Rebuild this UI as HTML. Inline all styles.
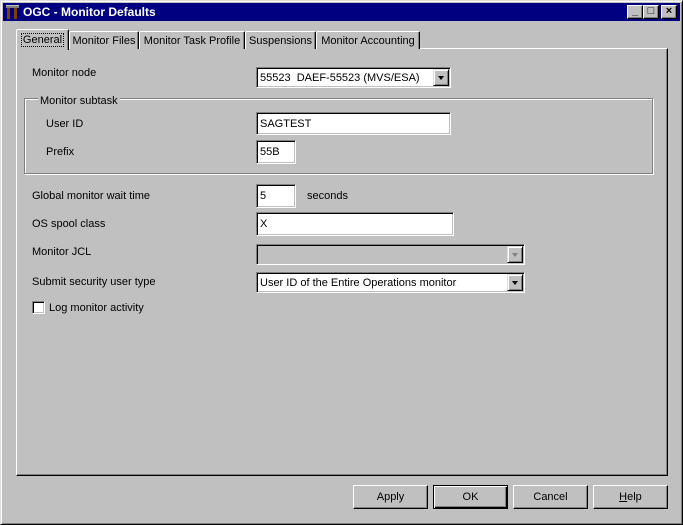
<!DOCTYPE html>
<html><head><meta charset="utf-8"><style>
*{box-sizing:border-box;margin:0;padding:0}
body{width:683px;height:525px;background:#c0c0c0;font-family:"Liberation Sans",sans-serif;font-size:11px;color:#000;position:relative;overflow:hidden}
.a{position:absolute}
.win{left:0;top:0;width:683px;height:525px;border:1px solid;border-color:#dfdfdf #000 #000 #dfdfdf;box-shadow:inset 1px 1px #fff,inset -1px -1px #808080}
.title{left:3px;top:3px;width:677px;height:18px;background:#000080;color:#fff;font-weight:bold;font-size:12px;line-height:18px;padding-left:20px}
.tb{top:5px;width:16px;height:14px;background:#c0c0c0;border:1px solid;border-color:#fff #000 #000 #fff;box-shadow:inset -1px -1px #808080;font-size:11px;line-height:11px;text-align:center;font-weight:bold;color:#000}
.panel{left:16px;top:48px;width:652px;height:428px;border:1px solid;border-color:#fff #000 #000 #fff;box-shadow:inset -1px -1px #808080}
.tab{top:31px;height:18px;border:1px solid;border-bottom:none;border-color:#fff #000 #000 #fff;box-shadow:inset -1px 0 #808080;background:#c0c0c0;text-align:center;line-height:19px;border-radius:2px 2px 0 0}
.sunk{border:1px solid;border-color:#808080 #fff #fff #808080;box-shadow:inset 1px 1px #000,inset -1px -1px #c0c0c0;background:#fff;padding:4px 0 0 3px;line-height:14px}
.btn{border:1px solid;border-color:#fff #000 #000 #fff;box-shadow:inset -1px -1px #808080;background:#c0c0c0;text-align:center;line-height:22px}
.arr{width:16px;height:17px;top:1px;right:1px;border:1px solid;border-color:#dfdfdf #000 #000 #dfdfdf;box-shadow:inset 1px 1px #fff,inset -1px -1px #808080;background:#c0c0c0}
.arr:after{content:"";position:absolute;left:4px;top:6px;border:3px solid transparent;border-top:4px solid #000;border-bottom:0;width:0}
.dis .arr:after{border-top-color:#808080}
</style></head><body>
<div class="a win"></div>
<div class="a title">OGC - Monitor Defaults</div>
<svg class="a" style="left:5px;top:4px" width="15" height="16"><rect x="1" y="1" width="13" height="3" fill="#808080"/><rect x="2" y="4" width="3" height="11" fill="#804000"/><rect x="9" y="4" width="3" height="11" fill="#804000"/><rect x="1" y="1" width="13" height="1" fill="#c0c0c0"/></svg>
<div class="a tb" style="left:627px">_</div>
<div class="a tb" style="left:643px">□</div>
<div class="a tb" style="left:661px">×</div>
<div class="a panel"></div>
<div class="a tab" style="left:69px;width:70px">Monitor Files</div>
<div class="a tab" style="left:139px;width:106px">Monitor Task Profile</div>
<div class="a tab" style="left:245px;width:71px">Suspensions</div>
<div class="a tab" style="left:316px;width:104px">Monitor Accounting</div>
<div class="a tab" style="left:16px;top:29px;width:53px;height:21px;z-index:2;border-bottom:none;line-height:20px"><span style="outline:1px dotted #000;padding:0 1px">General</span></div>
<div class="a" style="left:32px;top:67px">Monitor node</div>
<div class="a sunk" style="left:256px;top:67px;width:195px;height:21px;padding-top:3px">55523&nbsp; DAEF-55523 (MVS/ESA)<div class="a arr"></div></div>
<div class="a" style="left:24px;top:98px;width:629px;height:76px;border:1px solid #808080;box-shadow:1px 1px #fff,inset 1px 1px #fff"></div>
<div class="a" style="left:38px;top:95px;background:#c0c0c0;padding:0 2px">Monitor subtask</div>
<div class="a" style="left:46px;top:118px">User ID</div>
<div class="a sunk" style="left:256px;top:112px;width:195px;height:23px">SAGTEST</div>
<div class="a" style="left:46px;top:146px">Prefix</div>
<div class="a sunk" style="left:256px;top:140px;width:40px;height:24px">55B</div>
<div class="a" style="left:32px;top:190px">Global monitor wait time</div>
<div class="a sunk" style="left:256px;top:184px;width:40px;height:24px">5</div>
<div class="a" style="left:307px;top:190px">seconds</div>
<div class="a" style="left:32px;top:218px">OS spool class</div>
<div class="a sunk" style="left:256px;top:212px;width:198px;height:24px">X</div>
<div class="a" style="left:32px;top:246px">Monitor JCL</div>
<div class="a sunk dis" style="left:256px;top:244px;width:269px;height:21px;background:#c0c0c0"><div class="a arr"></div></div>
<div class="a" style="left:32px;top:276px">Submit security user type</div>
<div class="a sunk" style="left:256px;top:272px;width:269px;height:21px;padding-top:3px">User ID of the Entire Operations monitor<div class="a arr"></div></div>
<div class="a sunk" style="left:32px;top:301px;width:13px;height:13px;padding:0"></div>
<div class="a" style="left:49px;top:302px">Log monitor activity</div>
<div class="a btn" style="left:353px;top:485px;width:75px;height:24px">Apply</div>
<div class="a btn" style="left:433px;top:485px;width:75px;height:24px;border:1px solid #000;box-shadow:inset 1px 1px #fff,inset -1px -1px #000,inset -2px -2px #808080">OK</div>
<div class="a btn" style="left:513px;top:485px;width:75px;height:24px">Cancel</div>
<div class="a btn" style="left:593px;top:485px;width:75px;height:24px"><u>H</u>elp</div>
</body></html>
